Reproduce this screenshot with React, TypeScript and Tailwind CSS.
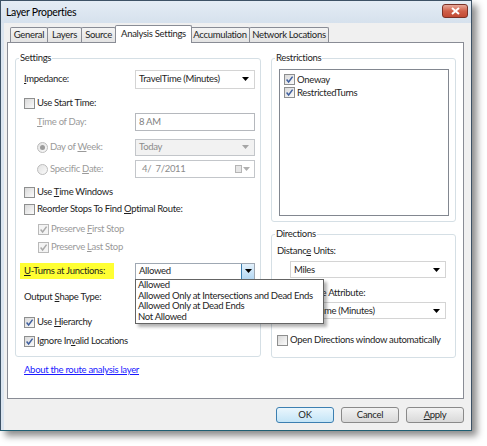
import type { ReactNode } from 'react'

function Check({ checked, disabled }: { checked?: boolean; disabled?: boolean }) {
  return (
    <span
      className={`relative inline-block w-[11px] h-[11px] shrink-0 border ${
        disabled ? 'border-[#b9b9b9] bg-[#f4f4f4]' : 'border-[#8e8f8f] bg-gradient-to-br from-[#d9d9d9] to-[#fbfbfb]'
      }`}
    >
      {checked && (
        <svg viewBox="0 0 9 9" className="absolute left-0 top-0 w-[9px] h-[9px]">
          <path
            d="M1.6 4.6 L3.6 7 L7.6 1.6"
            fill="none"
            stroke={disabled ? '#a9a9a9' : '#3f5f9e'}
            strokeWidth="1.5"
          />
        </svg>
      )}
    </span>
  )
}

function Radio({ on }: { on?: boolean }) {
  return (
    <span className="relative inline-flex items-center justify-center w-[11px] h-[11px] shrink-0 rounded-full border border-[#bcbcbc] bg-gradient-to-br from-[#e2e2e2] to-[#fafafa]">
      {on && <span className="w-[5px] h-[5px] rounded-full bg-[#9c9c9c]" />}
    </span>
  )
}

function Arrow({ color = '#000' }: { color?: string }) {
  return (
    <svg width="7" height="4" viewBox="0 0 7 4">
      <path d="M0 0 H7 L3.5 4 Z" fill={color} />
    </svg>
  )
}

function Combo({ value, className = '' }: { value: string; className?: string }) {
  return (
    <div className={`flex items-center justify-between border border-[#d4d4d4] bg-white pl-[3px] pr-[5px] ${className}`}>
      <span className="whitespace-nowrap">{value}</span>
      <Arrow />
    </div>
  )
}

function Row({ children, className = '' }: { children: ReactNode; className?: string }) {
  return <div className={`flex items-center h-[18px] ${className}`}>{children}</div>
}

function CheckLabel({ checked, disabled, children }: { checked?: boolean; disabled?: boolean; children: ReactNode }) {
  return (
    <span className="flex items-center gap-[2px]">
      <Check checked={checked} disabled={disabled} />
      <span className={`whitespace-nowrap ${disabled ? 'text-[#9a9a9a]' : ''}`}>{children}</span>
    </span>
  )
}

function Tab({ label, selected, w }: { label: string; selected?: boolean; w: string }) {
  if (selected) {
    return (
      <div className={`relative z-10 -mx-[1px] -mb-[1px] h-[18px] ${w} flex items-start justify-center pt-[2px] whitespace-nowrap border border-b-0 border-[#898c95] rounded-t-[2px] bg-white`}>
        {label}
      </div>
    )
  }
  return (
    <div className={`h-[15px] ${w} flex items-center justify-center whitespace-nowrap border border-b-0 border-[#898c95] -ml-[1px] rounded-t-[2px] bg-gradient-to-b from-[#f4f4f4] to-[#e3e3e3]`}>
      {label}
    </div>
  )
}

function Btn({ children, primary }: { children: ReactNode; primary?: boolean }) {
  return (
    <div
      className={`w-[58px] h-[16px] flex items-center justify-center rounded-[3px] border ${
        primary
          ? 'border-[#3c7fb1] bg-gradient-to-b from-[#eaf6fd] to-[#c4e5f7]'
          : 'border-[#8a8a8a] bg-gradient-to-b from-[#f3f3f3] to-[#d9d9d9]'
      }`}
    >
      <span>{children}</span>
    </div>
  )
}

export default function App() {
  return (
    <div className="w-[487px] h-[446px] bg-white font-[Lato,'Liberation_Sans',sans-serif] text-[9.5px] tracking-[-0.3px] leading-[12px] text-[#1e1e1e]">
      <div className="flex flex-col w-[472px] h-[431px] border border-[#3d5266] border-b-[#1f5f73] bg-[#dbe5f0] shadow-[5px_5px_7px_rgba(0,0,0,0.45)]">
        {/* title bar */}
        <div className="relative flex items-center h-[22px] px-[5px] bg-gradient-to-b from-[#e4ecf5] to-[#d6e1ed]">
          <span className="text-[10.5px] text-black">Layer Properties</span>
          <div className="absolute right-[3px] top-[3px] w-[26px] h-[14px] rounded-[3px] border border-[#7b3227] bg-gradient-to-b from-[#e6a99b] via-[#d0604a] to-[#c24a34] flex items-center justify-center">
            <svg width="9" height="8" viewBox="0 0 9 8">
              <path d="M1 1 L8 7 M8 1 L1 7" stroke="#fff" strokeWidth="2" />
            </svg>
          </div>
        </div>

        {/* body */}
        <div className="flex-1 flex flex-col ml-[3px] bg-[#f0f0f0] pt-[2px] pr-[7px]">
          <div className="flex items-end h-[17px] pl-[7px]">
            <Tab label="General" w="w-[38px]" />
            <Tab label="Layers" w="w-[35px]" />
            <Tab label="Source" w="w-[35px]" />
            <Tab label="Analysis Settings" w="w-[77px]" selected />
            <Tab label="Accumulation" w="w-[60px]" />
            <Tab label="Network Locations" w="w-[80px]" />
          </div>

          {/* panel */}
          <div className="relative ml-[3px] w-[457px] h-[357px] border border-[#898c95] bg-white">
            <div className="flex gap-[10px] pl-[7px] pt-[9px]">
              {/* Settings */}
              <fieldset className="relative w-[245px] h-[305px] border border-[#d5dfe5] rounded-[3px]">
                <legend className="ml-[3px] px-[1px] leading-[12px]">Settings</legend>
                <div className="flex flex-col pt-[6px] pl-[8px] pr-[5px]">
                  <Row>
                    <span className="w-[111px]">
                      <u>I</u>mpedance:
                    </span>
                    <Combo value="TravelTime (Minutes)" className="w-[120px] h-[19px]" />
                  </Row>
                  <Row className="mt-[6px]">
                    <CheckLabel>Use Start Time:</CheckLabel>
                  </Row>
                  <Row className="mt-[1px] pl-[13px]">
                    <span className="w-[98px] text-[#9a9a9a]">
                      <u>T</u>ime of Day:
                    </span>
                    <div className="w-[120px] h-[18px] flex items-center border border-[#b5b8bd] bg-white pl-[3px] text-[#808080]">
                      <span>8 AM</span>
                    </div>
                  </Row>
                  <Row className="mt-[7px] pl-[13px]">
                    <span className="w-[98px] flex items-center gap-[2px] text-[#9a9a9a]">
                      <Radio on />
                      <span>
                        Day of <u>W</u>eek:
                      </span>
                    </span>
                    <div className="w-[120px] h-[17px] flex items-center justify-between border border-[#c3c6ca] bg-[#f2f2f2] pl-[3px] pr-[5px] text-[#8c8c8c]">
                      <span>Today</span>
                      <Arrow color="#a5a5a5" />
                    </div>
                  </Row>
                  <Row className="mt-[4px] pl-[13px]">
                    <span className="w-[98px] flex items-center gap-[2px] text-[#9a9a9a]">
                      <Radio />
                      <span>
                        Specific <u>D</u>ate:
                      </span>
                    </span>
                    <div className="w-[120px] h-[18px] flex items-center justify-between border border-[#c3c6ca] bg-white pl-[6px] pr-[4px] text-[#8c8c8c]">
                      <span className="whitespace-pre">4/  7/2011</span>
                      <span className="flex items-center gap-[1px]">
                        <span className="w-[7px] h-[8px] border border-[#b5b5b5] bg-[#e6e6e6]" />
                        <Arrow color="#b0b0b0" />
                      </span>
                    </div>
                  </Row>
                  <Row className="mt-[5px]">
                    <CheckLabel>
                      Use <u>T</u>ime Windows
                    </CheckLabel>
                  </Row>
                  <Row className="-mt-[1px]">
                    <CheckLabel>
                      Reorder Stops To Find <u>O</u>ptimal Route:
                    </CheckLabel>
                  </Row>
                  <Row className="mt-[2px] pl-[14px]">
                    <CheckLabel checked disabled>
                      Preserve <u>F</u>irst Stop
                    </CheckLabel>
                  </Row>
                  <Row className="pl-[14px]">
                    <CheckLabel checked disabled>
                      Preserve <u>L</u>ast Stop
                    </CheckLabel>
                  </Row>
                  <Row className="relative mt-[6px]">
                    <span className="w-[111px]">
                      <span className="flex items-center -ml-[4px] pl-[4px] w-[94px] h-[16px] whitespace-nowrap bg-[#ffff33]">
                        <span>
                          <u>U</u>-Turns at Junctions:
                        </span>
                      </span>
                    </span>
                    <div className="w-[120px] h-[17px] flex items-center justify-between border border-[#9fa8b3] bg-white pl-[3px]">
                      <span>Allowed</span>
                      <span className="w-[13px] h-[15px] flex items-center justify-center border-l border-[#3c7fb1] bg-gradient-to-b from-[#e3f1fc] to-[#b5d8f3]">
                        <Arrow />
                      </span>
                    </div>
                    {/* open dropdown list */}
                    <div className="absolute z-20 left-[111px] top-[17px] w-[189px] border border-[#646464] bg-white pl-[2px] leading-[10.7px] whitespace-nowrap shadow-[3px_3px_3px_rgba(0,0,0,0.3)]">
                      <div>Allowed</div>
                      <div>Allowed Only at Intersections and Dead Ends</div>
                      <div>Allowed Only at Dead Ends</div>
                      <div>Not Allowed</div>
                    </div>
                  </Row>
                  <Row className="mt-[8px]">
                    <span>
                      Output <u>S</u>hape Type:
                    </span>
                  </Row>
                  <Row className="mt-[7px]">
                    <CheckLabel checked>
                      Use <u>H</u>ierarchy
                    </CheckLabel>
                  </Row>
                  <Row className="mt-[1px]">
                    <CheckLabel checked>
                      Ignore In<u>v</u>alid Locations
                    </CheckLabel>
                  </Row>
                </div>
              </fieldset>

              {/* right column */}
              <div className="flex flex-col w-[185px]">
                <fieldset className="h-[170px] border border-[#d5dfe5] rounded-[3px]">
                  <legend className="ml-[3px] px-[1px] leading-[12px]">Restrictions</legend>
                  <div className="mt-[5px] ml-[7px] w-[170px] h-[147px] border border-[#828790] bg-white pt-[3px] pl-[4px]">
                    <div className="h-[13px] flex items-center">
                      <CheckLabel checked>Oneway</CheckLabel>
                    </div>
                    <div className="h-[13px] flex items-center">
                      <CheckLabel checked>RestrictedTurns</CheckLabel>
                    </div>
                  </div>
                </fieldset>
                <fieldset className="mt-[6px] h-[130px] border border-[#d5dfe5] rounded-[3px]">
                  <legend className="ml-[3px] px-[1px] leading-[12px]">Directions</legend>
                  <div className="flex flex-col pl-[5px]">
                    <div className="mt-[4px] h-[14px] flex items-center">
                      <span>
                        Distanc<u>e</u> Units:
                      </span>
                    </div>
                    <Combo value="Miles" className="mt-[3px] ml-[13px] w-[156px] h-[17px]" />
                    <div className="mt-[8px] h-[14px] flex items-center">
                      <CheckLabel>Use Time Attribute:</CheckLabel>
                    </div>
                    <Combo value="TravelTime (Minutes)" className="mt-[2px] ml-[13px] w-[156px] h-[17px]" />
                    <div className="mt-[14px] h-[14px] flex items-center">
                      <CheckLabel>Open Directions window automatically</CheckLabel>
                    </div>
                  </div>
                </fieldset>
              </div>
            </div>
            <div className="mt-[6px] pl-[16px]">
              <span className="text-[#1a1aff] underline">About the route analysis layer</span>
            </div>
          </div>

          {/* buttons */}
          <div className="flex justify-end gap-[7px] mt-[8px]">
            <Btn primary>OK</Btn>
            <Btn>Cancel</Btn>
            <Btn>
              <u>A</u>pply
            </Btn>
          </div>
        </div>
      </div>
    </div>
  )
}
